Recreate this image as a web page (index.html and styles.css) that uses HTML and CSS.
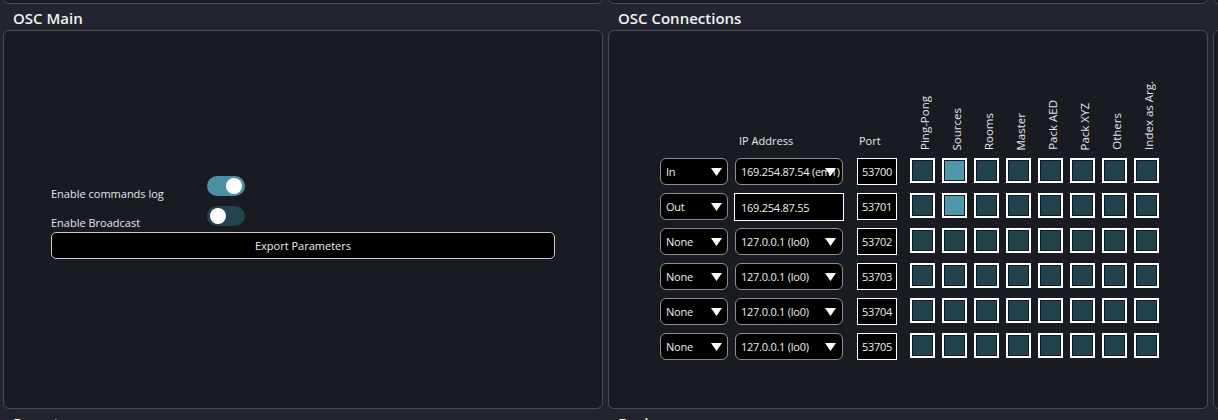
FILE: index.html
```html
<!DOCTYPE html>
<html lang="en">
<head>
<meta charset="utf-8">
<title>OSC</title>
<link rel="stylesheet" href="styles.css">
</head>
<body>
<div class="page">
  <div class="row row-top">
    <section class="pane"><div class="box box-top"></div></section>
    <section class="pane"><div class="box box-top"></div></section>
    <section class="pane"><div class="box box-top"></div></section>
  </div>

  <div class="row row-main">
    <section class="pane">
      <h2 class="pane-title">OSC Main</h2>
      <div class="box box-main">
        <div class="main-content">
          <div class="opt opt-first">
            <span class="opt-label">Enable commands log</span>
            <span class="toggle on"><span class="knob"></span></span>
          </div>
          <div class="opt opt-second">
            <span class="opt-label">Enable Broadcast</span>
            <span class="toggle"><span class="knob"></span></span>
          </div>
          <button class="export">Export Parameters</button>
        </div>
      </div>
    </section>

    <section class="pane">
      <h2 class="pane-title">OSC Connections</h2>
      <div class="box box-conn">
        <div class="conn-grid">
          <div class="hcell"></div>
          <div class="hcell hlabel">IP Address</div>
          <div class="hcell hlabel">Port</div>
          <div class="hcell hrot"><span>Ping-Pong</span></div>
          <div class="hcell hrot"><span>Sources</span></div>
          <div class="hcell hrot"><span>Rooms</span></div>
          <div class="hcell hrot"><span>Master</span></div>
          <div class="hcell hrot"><span>Pack AED</span></div>
          <div class="hcell hrot"><span>Pack XYZ</span></div>
          <div class="hcell hrot"><span>Others</span></div>
          <div class="hcell hrot"><span>Index as Arg.</span></div>

          <div class="combo dir"><span class="combo-text">In</span><svg class="arrow" viewBox="0 0 11 8"><path d="M0 0H11L5.5 8Z"/></svg></div>
          <div class="combo ip"><span class="combo-text">169.254.87.54 (em1)</span><svg class="arrow" viewBox="0 0 11 8"><path d="M0 0H11L5.5 8Z"/></svg></div>
          <div class="port">53700</div>
          <span class="cb"></span><span class="cb checked"></span><span class="cb"></span><span class="cb"></span><span class="cb"></span><span class="cb"></span><span class="cb"></span><span class="cb"></span>

          <div class="combo dir"><span class="combo-text">Out</span><svg class="arrow" viewBox="0 0 11 8"><path d="M0 0H11L5.5 8Z"/></svg></div>
          <div class="ip-input">169.254.87.55</div>
          <div class="port">53701</div>
          <span class="cb"></span><span class="cb checked"></span><span class="cb"></span><span class="cb"></span><span class="cb"></span><span class="cb"></span><span class="cb"></span><span class="cb"></span>

          <div class="combo dir"><span class="combo-text">None</span><svg class="arrow" viewBox="0 0 11 8"><path d="M0 0H11L5.5 8Z"/></svg></div>
          <div class="combo ip"><span class="combo-text">127.0.0.1 (lo0)</span><svg class="arrow" viewBox="0 0 11 8"><path d="M0 0H11L5.5 8Z"/></svg></div>
          <div class="port">53702</div>
          <span class="cb"></span><span class="cb"></span><span class="cb"></span><span class="cb"></span><span class="cb"></span><span class="cb"></span><span class="cb"></span><span class="cb"></span>

          <div class="combo dir"><span class="combo-text">None</span><svg class="arrow" viewBox="0 0 11 8"><path d="M0 0H11L5.5 8Z"/></svg></div>
          <div class="combo ip"><span class="combo-text">127.0.0.1 (lo0)</span><svg class="arrow" viewBox="0 0 11 8"><path d="M0 0H11L5.5 8Z"/></svg></div>
          <div class="port">53703</div>
          <span class="cb"></span><span class="cb"></span><span class="cb"></span><span class="cb"></span><span class="cb"></span><span class="cb"></span><span class="cb"></span><span class="cb"></span>

          <div class="combo dir"><span class="combo-text">None</span><svg class="arrow" viewBox="0 0 11 8"><path d="M0 0H11L5.5 8Z"/></svg></div>
          <div class="combo ip"><span class="combo-text">127.0.0.1 (lo0)</span><svg class="arrow" viewBox="0 0 11 8"><path d="M0 0H11L5.5 8Z"/></svg></div>
          <div class="port">53704</div>
          <span class="cb"></span><span class="cb"></span><span class="cb"></span><span class="cb"></span><span class="cb"></span><span class="cb"></span><span class="cb"></span><span class="cb"></span>

          <div class="combo dir"><span class="combo-text">None</span><svg class="arrow" viewBox="0 0 11 8"><path d="M0 0H11L5.5 8Z"/></svg></div>
          <div class="combo ip"><span class="combo-text">127.0.0.1 (lo0)</span><svg class="arrow" viewBox="0 0 11 8"><path d="M0 0H11L5.5 8Z"/></svg></div>
          <div class="port">53705</div>
          <span class="cb"></span><span class="cb"></span><span class="cb"></span><span class="cb"></span><span class="cb"></span><span class="cb"></span><span class="cb"></span><span class="cb"></span>
        </div>
      </div>
    </section>

    <section class="pane">
      <h2 class="pane-title">&nbsp;</h2>
      <div class="box box-main"></div>
    </section>
  </div>

  <div class="row row-bottom">
    <section class="pane"><h2 class="pane-title">Presets</h2></section>
    <section class="pane"><h2 class="pane-title">Engine</h2></section>
    <section class="pane"><h2 class="pane-title">&nbsp;</h2></section>
  </div>
</div>
</body>
</html>
```

FILE: styles.css
```css
html, body {
  margin: 0;
  padding: 0;
  height: 100%;
  overflow: hidden;
  background: #22252e;
}

body {
  font-family: "Open Sans", "Noto Sans", sans-serif;
  color: #e8e8e8;
}

.page {
  padding-left: 3px;
}

.row {
  display: grid;
  grid-template-columns: 600px 600px 600px;
  column-gap: 5px;
}

.box {
  box-sizing: border-box;
  background: #191b22;
  border: 1px solid #4b4d54;
  border-radius: 6px;
}

.box-top {
  height: 20px;
  margin-top: -16px;
}

.box-main {
  height: 379px;
}

.pane-title {
  margin: 0;
  padding: 4px 10px 2px;
  font-size: 15px;
  line-height: 20px;
  font-weight: 600;
  color: #f2f2f2;
  white-space: nowrap;
}

/* ---------- OSC Main ---------- */
.box-main {
  display: flex;
  align-items: center;
  justify-content: center;
}

.main-content {
  width: 504px;
  display: flex;
  flex-direction: column;
  margin-top: -4px;
}

.opt {
  display: flex;
  align-items: flex-start;
  font-size: 11px;
  line-height: 15px;
}

.opt-first { height: 30px; }
.opt-second { height: 26px; }

.opt-label {
  width: 156px;
  padding-top: 10px;
  color: #e6e6e6;
}
.opt-second .opt-label { padding-top: 9px; }

.toggle {
  box-sizing: border-box;
  width: 38px;
  height: 20px;
  border-radius: 10px;
  padding: 2px 3px;
  display: flex;
  justify-content: flex-start;
  align-items: center;
  background: #23444e;
}
.toggle.on {
  background: #4b8fa4;
  justify-content: flex-end;
}
.knob {
  width: 16px;
  height: 16px;
  border-radius: 50%;
  background: #ffffff;
}

.export {
  box-sizing: border-box;
  width: 504px;
  height: 27px;
  background: #000;
  border: 1px solid #c8c8c8;
  border-radius: 5px;
  color: #eeeeee;
  font-family: inherit;
  font-size: 11px;
  padding: 0;
}

/* ---------- OSC Connections ---------- */
.box-conn {
  height: 379px;
  padding: 49px 0 0 51px;
}

.conn-grid {
  display: grid;
  grid-template-columns: 75px 122px 53px repeat(7, 32px) 25px;
  grid-template-rows: 70px repeat(6, 27px);
  row-gap: 8px;
  font-size: 11px;
  line-height: 15px;
}

.hcell {
  display: flex;
  align-items: flex-end;
}

.hlabel {
  padding-left: 4px;
  padding-bottom: 2px;
  color: #e6e6e6;
}
.hlabel + .hlabel { padding-left: 2px; }

.hrot {
  width: 25px;
  justify-content: center;
}
.hrot span {
  writing-mode: vertical-rl;
  transform: rotate(180deg);
  white-space: nowrap;
  color: #e6e6e6;
  font-size: 11.5px;
  margin-left: 3px;
}

.combo {
  position: relative;
  box-sizing: border-box;
  height: 27px;
  background: #000;
  border: 1px solid #8e8e8e;
  border-radius: 6px;
  display: flex;
  align-items: center;
  padding-left: 5px;
  overflow: hidden;
  white-space: nowrap;
}
.combo.dir { width: 68px; }
.combo.ip { width: 108px; }

.combo-text {
  color: #eeeeee;
  letter-spacing: -0.25px;
}

.arrow {
  position: absolute;
  right: 5px;
  top: 9px;
  width: 11px;
  height: 8px;
  fill: #ffffff;
}
.combo.ip .arrow { right: 6px; }

.ip-input {
  box-sizing: border-box;
  width: 110px;
  height: 28px;
  margin-left: -1px;
  background: #000;
  border: 1px solid #ffffff;
  display: flex;
  align-items: center;
  padding-left: 6px;
  color: #eeeeee;
  letter-spacing: -0.25px;
}

.port {
  box-sizing: border-box;
  width: 40px;
  height: 27px;
  background: #000;
  border: 1px solid #ffffff;
  display: flex;
  align-items: center;
  justify-content: center;
  color: #eeeeee;
  letter-spacing: -0.25px;
}

.cb {
  box-sizing: border-box;
  width: 25px;
  height: 25px;
  border: 2px solid #ffffff;
  background: #21434d;
  box-shadow: inset 0 0 0 1px #14171d;
}
.cb.checked {
  background: #4f97ad;
}
```
